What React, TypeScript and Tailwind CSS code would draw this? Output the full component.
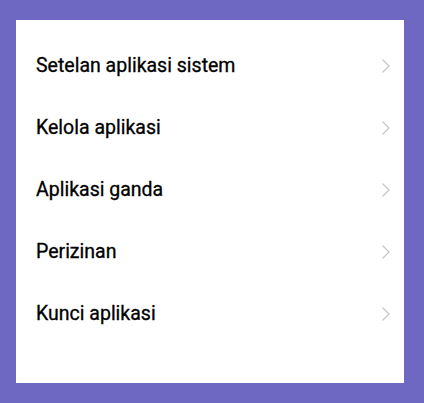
export default function App() {
  const items = [
    "Setelan aplikasi sistem",
    "Kelola aplikasi",
    "Aplikasi ganda",
    "Perizinan",
    "Kunci aplikasi",
  ];
  return (
    <div className="w-[424px] h-[403px] bg-[#6f68c3] pt-[20px] pl-[16px]">
      <div className="w-[388px] h-[363px] bg-white pt-[15px]" style={{ fontFamily: "Roboto, sans-serif" }}>
        {items.map((t) => (
          <div key={t} className="h-[62px] flex items-center justify-between pl-[20px] pr-[13px]">
            <span className="text-[19.5px] font-normal text-[#000000] [-webkit-text-stroke:0.3px_#000]">{t}</span>
            <svg width="10" height="16" viewBox="0 0 10 16" fill="none">
              <path d="M1.5 1.5 L8 8 L1.5 14.5" stroke="#c4c4c4" strokeWidth="1.2" />
            </svg>
          </div>
        ))}
      </div>
    </div>
  );
}
